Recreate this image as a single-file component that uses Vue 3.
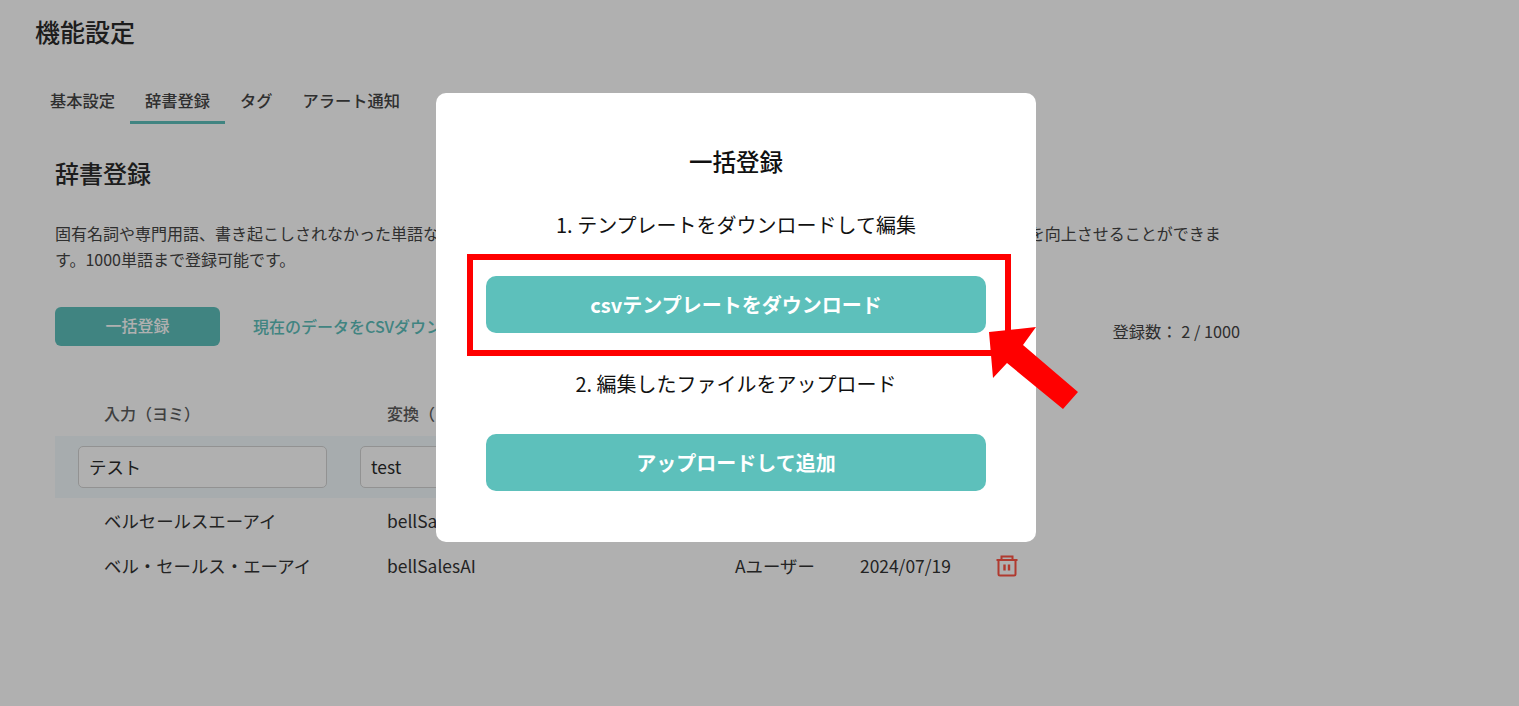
<script setup>
const words = [
  { yomi: 'ベルセールスエーアイ', word: 'bellSalesAI', user: 'Aユーザー', date: '2024/07/19' },
  { yomi: 'ベル・セールス・エーアイ', word: 'bellSalesAI', user: 'Aユーザー', date: '2024/07/19' }
]
const tabs = ['基本設定', '辞書登録', 'タグ', 'アラート通知']
</script>

<template>
  <div class="page">
    <h1 class="page-title">機能設定</h1>
    <nav class="tabs">
      <span v-for="(tab, i) in tabs" :key="tab" class="tab" :class="{ active: i === 1 }">{{ tab }}</span>
    </nav>

    <section class="content">
      <h2 class="section-title">辞書登録</h2>
      <p class="desc">固有名詞や専門用語、書き起こしされなかった単語などを辞書に登録しておくことで、通話の書き起こしや要約の際の単語の認識の精度を向上させることができます。1000単語まで登録可能です。</p>

      <div class="actions">
        <button class="bulk">一括登録</button>
        <a class="csv">現在のデータをCSVダウンロード</a>
        <span class="count">登録数： 2 / 1000</span>
      </div>

      <div class="grid head">
        <span class="first">入力（ヨミ）</span>
        <span>変換（タンゴ）</span>
      </div>
      <div class="edit-row">
        <input class="field" value="テスト" readonly>
        <input class="field" value="test" readonly>
      </div>
      <div v-for="w in words" :key="w.yomi" class="grid row">
        <span class="first">{{ w.yomi }}</span>
        <span>{{ w.word }}</span>
        <span>{{ w.user }}</span>
        <span>{{ w.date }}</span>
        <svg class="trash" width="22" height="22" viewBox="0 0 22 22" fill="none" stroke="#ff5544" stroke-width="2">
          <path d="M0.5 5h21" />
          <path d="M5.5 5V1.5h11V5" />
          <path d="M2.5 5v14a1.5 1.5 0 0 0 1.5 1.5h14a1.5 1.5 0 0 0 1.5-1.5V5" />
          <path d="M8.5 9.5v6M13 9.5v6" stroke-width="2.4" />
        </svg>
      </div>
    </section>

    <div class="overlay">
      <div class="modal">
        <h3 class="modal-title">一括登録</h3>
        <p class="step first-step">1. テンプレートをダウンロードして編集</p>
        <button class="primary">csvテンプレートをダウンロード</button>
        <p class="step second-step">2. 編集したファイルをアップロード</p>
        <button class="primary">アップロードして追加</button>

        <div class="callout"></div>
        <svg class="arrow" width="90" height="83" viewBox="0 0 90 83">
          <polygon points="0,5 47,0 34,18 89,65 74,82 18,36 4,51" fill="#ff0000" />
        </svg>
      </div>
    </div>
  </div>
</template>

<style scoped>
.page {
  position: relative;
  height: 706px;
  overflow: hidden;
  background: #fff;
  color: #2b2b2b;
  font-family: "Noto Sans CJK JP", "Noto Sans", sans-serif;
  font-size: 16px;
}
.page-title {
  margin: 0;
  padding: 13px 0 0 35px;
  font-size: 25px;
  line-height: 36px;
  font-weight: 500;
}
.tabs {
  display: flex;
  margin: 30px 0 0 35px;
}
.tab {
  padding: 0 15px;
  height: 45px;
  line-height: 43px;
  font-size: 16.25px;
  font-weight: 500;
  color: #444;
  box-sizing: border-box;
}
.tab.active {
  border-bottom: 3px solid #5dc0bb;
}
.content {
  padding: 0 0 0 55px;
  width: 1170px;
}
.section-title {
  margin: 31px 0 0;
  font-size: 24px;
  line-height: 36px;
  font-weight: 500;
}
.desc {
  margin: 29px 0 0;
  line-height: 26px;
  color: #444;
}
.actions {
  display: flex;
  align-items: flex-start;
  margin-top: 35px;
}
.bulk {
  width: 165px;
  height: 39px;
  padding: 0 0 4px;
  border: 0;
  border-radius: 6px;
  background: #5dc0bb;
  color: #fff;
  font: 500 16px "Noto Sans CJK JP", sans-serif;
}
.csv {
  margin-left: 33px;
  line-height: 38px;
  color: #5dc0bb;
  font-weight: 500;
}
.count {
  margin-left: auto;
  margin-right: -15px;
  margin-top: 11px;
  line-height: 26px;
  font-size: 16.25px;
  color: #444;
}
.grid {
  display: grid;
  grid-template-columns: 332px 348px 125px 137px 33px;
  align-items: center;
  width: 975px;
}
.first {
  padding-left: 49px;
}
.head {
  margin-top: 54px;
  height: 26px;
  color: #5c5c5c;
  font-weight: 500;
}
.edit-row {
  display: flex;
  gap: 33px;
  width: 975px;
  height: 62px;
  margin-top: 10px;
  padding: 10px 23px;
  box-sizing: border-box;
  background: #f2fafd;
}
.field {
  width: 249px;
  height: 42px;
  box-sizing: border-box;
  padding: 0 10px 2px;
  border: 1px solid #d4d4d4;
  border-radius: 5px;
  background: #fff;
  color: #2b2b2b;
  font: 400 17.4px "Noto Sans CJK JP", sans-serif;
  outline: none;
}
.row {
  height: 45px;
  font-size: 17.4px;
  color: #333;
}
.trash {
  margin-left: -1px;
}
.overlay {
  position: fixed;
  inset: 0;
  background: rgba(0, 0, 0, 0.31);
}
.modal {
  position: relative;
  box-sizing: border-box;
  width: 600px;
  height: 449px;
  margin: 93px 0 0 436px;
  padding: 49px 50px 0;
  border-radius: 10px;
  background: #fff;
  color: #111;
  text-align: center;
}
.modal-title {
  margin: 0;
  font-size: 23.5px;
  line-height: 38px;
  font-weight: 500;
}
.step {
  margin: 0;
  font-size: 20px;
  line-height: 30px;
}
.first-step {
  margin-top: 30px;
  margin-bottom: 36px;
}
.second-step {
  margin-top: 36px;
  margin-bottom: 35px;
}
.primary {
  display: block;
  width: 500px;
  height: 57px;
  border: 0;
  border-radius: 10px;
  background: #5dc0bb;
  color: #fff;
  font: 700 20px "Noto Sans CJK JP", sans-serif;
}
.callout {
  position: absolute;
  left: 31px;
  top: 161px;
  width: 544px;
  height: 102px;
  box-sizing: border-box;
  border: 6px solid #ff0000;
}
.arrow {
  position: absolute;
  left: 553px;
  top: 234px;
}
</style>
